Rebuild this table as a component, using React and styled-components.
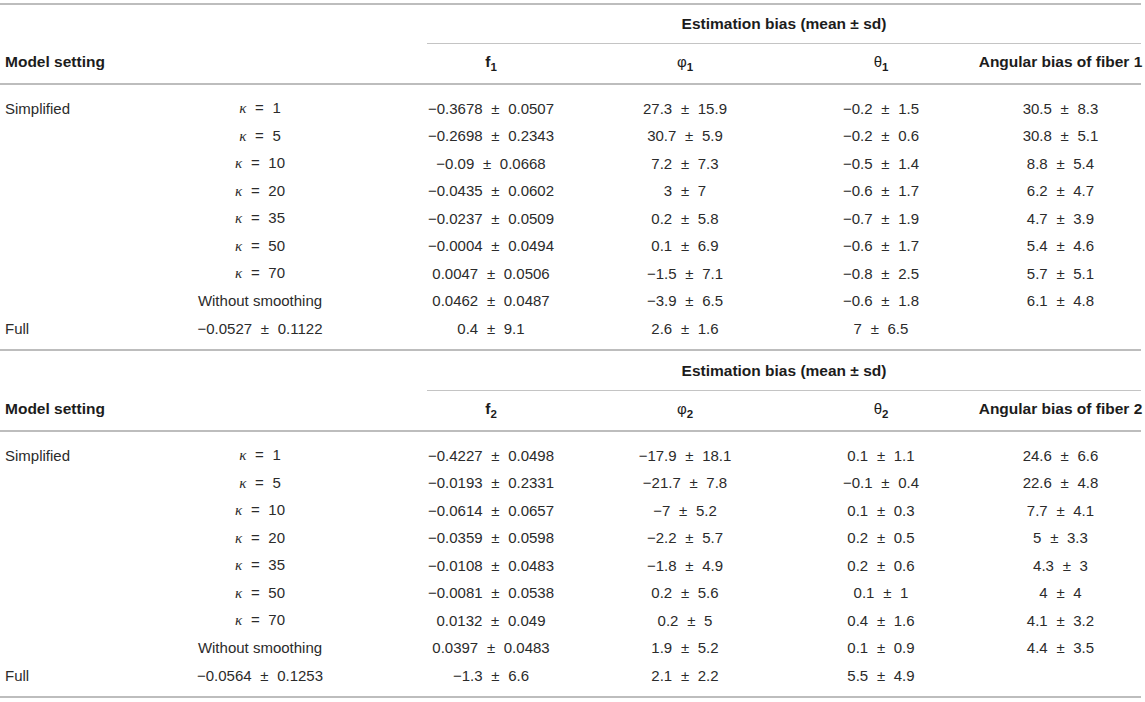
import React from "react";
import styled, { createGlobalStyle } from "styled-components";

const Global = createGlobalStyle`
  html, body { margin: 0; padding: 0; background: #fff; }
  body { font-family: "Liberation Sans", Arial, sans-serif; color: #2b2b2b; }
`;

const COLS = "152px 216px 246px 142px 250px 135px";

const Page = styled.div`
  width: 1141px;
  padding-top: 3px;
`;

const Block = styled.section`
  border-top: 2px solid #bdbdbd;
  ${(p) => (p.$last ? "border-bottom: 2px solid #bdbdbd;" : "")}
`;

const Row = styled.div`
  display: grid;
  grid-template-columns: ${COLS};
  align-items: center;
`;

const SpanRow = styled(Row)`
  height: ${(p) => (p.$tall ? 40 : 39)}px;
`;

const SpanHead = styled.div`
  grid-column: 3 / 7;
  align-self: stretch;
  margin-left: 59px;
  border-bottom: 1px solid #c4c4c4;
  display: flex;
  align-items: center;
  justify-content: center;
  font-weight: 700;
  font-size: 15.5px;
  color: #1c1c1c;
  white-space: nowrap;
`;

const HeadRow = styled(Row)`
  height: 41px;
  padding-bottom: 4px;
  box-sizing: border-box;
  border-bottom: 2px solid #bdbdbd;
`;

const HeadCell = styled.div`
  display: flex;
  justify-content: ${(p) => (p.$left ? "flex-start" : "center")};
  align-items: baseline;
  font-weight: 700;
  font-size: 15.5px;
  color: #1c1c1c;
  padding-left: ${(p) => (p.$left ? "5px" : "0")};
  padding-right: ${(p) => (p.$end ? "26px" : "0")};
  white-space: nowrap;
`;

const Sym = styled.span`
  font-weight: 400;
  font-size: 15px;
`;

const Sub = styled.sub`
  font-size: 11.5px;
  font-weight: 700;
  position: relative;
  top: 4px;
  vertical-align: baseline;
  line-height: 0;
`;

const Body = styled.div`
  padding: 9.25px 0 7.25px;
`;

const BodyRow = styled(Row)`
  height: 27.5px;
`;

const Cell = styled.div`
  display: flex;
  justify-content: ${(p) => (p.$left ? "flex-start" : "center")};
  font-size: 15px;
  padding-left: ${(p) => (p.$left ? "5px" : "0")};
  padding-right: ${(p) => (p.$end ? "26px" : "0")};
  white-space: pre;
`;

const Kappa = styled.i`
  font-family: "Liberation Serif", "DejaVu Serif", serif;
  font-size: 15px;
`;

const Op = styled.span`
  margin: 0 4.5px;
`;

const Val = ({ v }) => {
  if (!v) return null;
  const [a, b] = v.split("±");
  return (
    <span>
      {a.trim()} <Op>±</Op> {b.trim()}
    </span>
  );
};

const Setting = ({ s }) => {
  if (s.startsWith("k")) {
    return (
      <span>
        <Kappa>κ</Kappa> <Op>=</Op> {s.slice(1)}
      </span>
    );
  }
  return <span>{s}</span>;
};

const table1 = [
  ["Simplified", "k1", "−0.3678 ± 0.0507", "27.3 ± 15.9", "−0.2 ± 1.5", "30.5 ± 8.3"],
  ["", "k5", "−0.2698 ± 0.2343", "30.7 ± 5.9", "−0.2 ± 0.6", "30.8 ± 5.1"],
  ["", "k10", "−0.09 ± 0.0668", "7.2 ± 7.3", "−0.5 ± 1.4", "8.8 ± 5.4"],
  ["", "k20", "−0.0435 ± 0.0602", "3 ± 7", "−0.6 ± 1.7", "6.2 ± 4.7"],
  ["", "k35", "−0.0237 ± 0.0509", "0.2 ± 5.8", "−0.7 ± 1.9", "4.7 ± 3.9"],
  ["", "k50", "−0.0004 ± 0.0494", "0.1 ± 6.9", "−0.6 ± 1.7", "5.4 ± 4.6"],
  ["", "k70", "0.0047 ± 0.0506", "−1.5 ± 7.1", "−0.8 ± 2.5", "5.7 ± 5.1"],
  ["", "Without smoothing", "0.0462 ± 0.0487", "−3.9 ± 6.5", "−0.6 ± 1.8", "6.1 ± 4.8"],
  ["Full", "−0.0527 ± 0.1122", "0.4 ± 9.1", "2.6 ± 1.6", "7 ± 6.5", ""],
];

const table2 = [
  ["Simplified", "k1", "−0.4227 ± 0.0498", "−17.9 ± 18.1", "0.1 ± 1.1", "24.6 ± 6.6"],
  ["", "k5", "−0.0193 ± 0.2331", "−21.7 ± 7.8", "−0.1 ± 0.4", "22.6 ± 4.8"],
  ["", "k10", "−0.0614 ± 0.0657", "−7 ± 5.2", "0.1 ± 0.3", "7.7 ± 4.1"],
  ["", "k20", "−0.0359 ± 0.0598", "−2.2 ± 5.7", "0.2 ± 0.5", "5 ± 3.3"],
  ["", "k35", "−0.0108 ± 0.0483", "−1.8 ± 4.9", "0.2 ± 0.6", "4.3 ± 3"],
  ["", "k50", "−0.0081 ± 0.0538", "0.2 ± 5.6", "0.1 ± 1", "4 ± 4"],
  ["", "k70", "0.0132 ± 0.049", "0.2 ± 5", "0.4 ± 1.6", "4.1 ± 3.2"],
  ["", "Without smoothing", "0.0397 ± 0.0483", "1.9 ± 5.2", "0.1 ± 0.9", "4.4 ± 3.5"],
  ["Full", "−0.0564 ± 0.1253", "−1.3 ± 6.6", "2.1 ± 2.2", "5.5 ± 4.9", ""],
];

const Col2 = ({ s }) => (s.includes("±") ? <Val v={s} /> : <Setting s={s} />);

const BiasTable = ({ n, rows, last }) => (
  <Block $last={last}>
    <SpanRow $tall={last}>
      <div />
      <div />
      <SpanHead>
        <span>Estimation bias (mean ± sd)</span>
      </SpanHead>
    </SpanRow>
    <HeadRow>
      <HeadCell $left>Model setting</HeadCell>
      <HeadCell />
      <HeadCell>
        <span>f</span>
        <Sub>{n}</Sub>
      </HeadCell>
      <HeadCell>
        <Sym>φ</Sym>
        <Sub>{n}</Sub>
      </HeadCell>
      <HeadCell>
        <Sym>θ</Sym>
        <Sub>{n}</Sub>
      </HeadCell>
      <HeadCell $end>
        <span>Angular bias of fiber {n}</span>
      </HeadCell>
    </HeadRow>
    <Body>
      {rows.map((r, i) => (
        <BodyRow key={i}>
          <Cell $left>{r[0]}</Cell>
          <Cell>
            <Col2 s={r[1]} />
          </Cell>
          <Cell>
            <Val v={r[2]} />
          </Cell>
          <Cell>
            <Val v={r[3]} />
          </Cell>
          <Cell>
            <Val v={r[4]} />
          </Cell>
          <Cell $end>
            <Val v={r[5]} />
          </Cell>
        </BodyRow>
      ))}
    </Body>
  </Block>
);

export default function App() {
  return (
    <>
      <Global />
      <Page>
        <BiasTable n={1} rows={table1} />
        <BiasTable n={2} rows={table2} last />
      </Page>
    </>
  );
}
